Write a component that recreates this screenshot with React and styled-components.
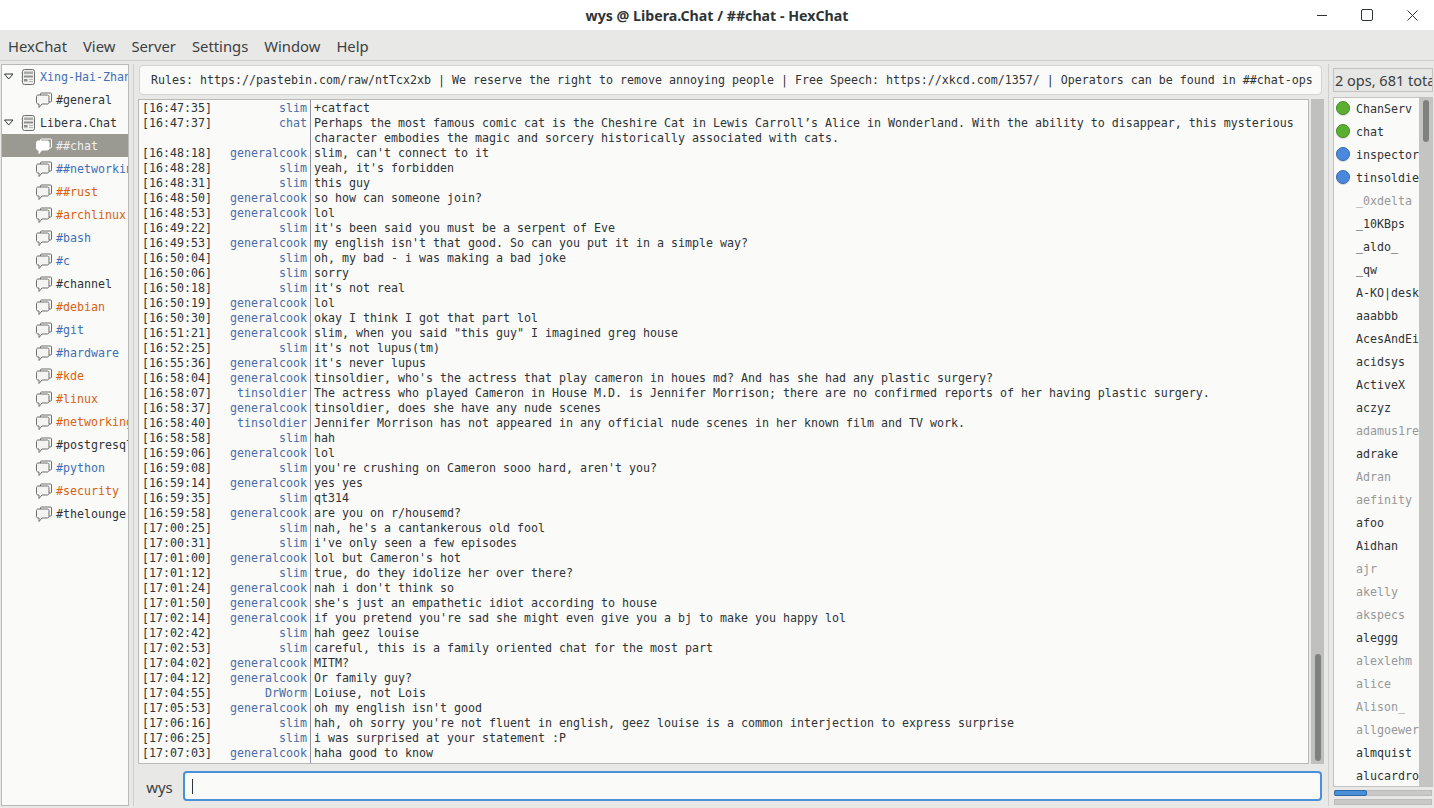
import React from "react";
import styled, { createGlobalStyle } from "styled-components";

const mono = `"DejaVu Sans Mono", monospace`;
const sans = `"Noto Sans", "Open Sans", sans-serif`;

const Global = createGlobalStyle`
  html, body { margin: 0; padding: 0; background: #e8e8e7; }
  * { box-sizing: border-box; }
`;

const Win = styled.div`
  width: 1434px; height: 808px; display: flex; flex-direction: column; overflow: hidden;
  background: #e8e8e7; color: #2e3436; font-family: ${sans};
`;
const TitleBar = styled.div`
  height: 30px; flex: none; background: #fff; display: flex; align-items: center; justify-content: center; position: relative;
  font-size: 14.2px; font-weight: 700; color: #2e3436;
`;
const WinButtons = styled.div`
  position: absolute; right: -1px; top: 0; height: 30px; display: flex;
`;
const WinButton = styled.div`
  width: 45px; height: 30px; display: flex; align-items: center; justify-content: center; color: #2e3436;
`;
const MenuBar = styled.div`
  height: 31px; flex: none; display: flex; align-items: center; padding: 2px 0 0 8px; gap: 16px;
  font-size: 14.8px; color: #3b4042; border-bottom: 1px solid #cfcfcd;
`;
const Body = styled.div`
  flex: 1; min-height: 0; display: flex; padding: 3px 1px 2px 1px;
`;
const TreePane = styled.div`
  width: 128px; flex: none; background: #fafaf9; border: 1px solid #b9b9b7; overflow: hidden;
`;
const TreeRow = styled.div`
  height: 23px; display: flex; align-items: center; white-space: nowrap; overflow: hidden;
  font: 11.63px ${mono};
  padding-left: ${p => (p.$server ? 2 : 34)}px;
  color: ${p => p.$selected ? "#efefef" : p.$color || "#2e3436"};
  background: ${p => p.$selected ? "#9a9992" : "transparent"};
`;
const Arrow = styled.svg`
  width: 12px; height: 8px; flex: none; margin-right: 4px;
`;
const RowIcon = styled.svg`
  width: 16px; height: 16px; flex: none; margin-right: 4px;
`;
const Divider = styled.div`
  width: 9px; flex: none; position: relative;
  &::after { content: ""; position: absolute; left: 4px; top: 0; bottom: 0; width: 1px; background: #cfcfcd; }
`;
const Center = styled.div`
  flex: 1; min-width: 0; display: flex; flex-direction: column;
`;
const Topic = styled.div`
  height: 30px; flex: none; margin: 1px 2px 0 1px; background: #fafaf9; border: 1px solid #d3d3d1; border-radius: 4px;
  font: 11.63px ${mono}; color: #2e3436; display: flex; align-items: center; padding-left: 11px; white-space: pre; overflow: hidden;
`;
const ChatRow = styled.div`
  flex: 1; min-height: 0; display: flex; margin-top: 4px;
`;
const ChatBox = styled.div`
  flex: 1; min-width: 0; background: #fafaf9; border: 1px solid #b9b9b7; position: relative; overflow: hidden; padding-top: 1px;
`;
const SepLine = styled.div`
  position: absolute; top: 0; bottom: 0; left: 171px; width: 1px; background: #8f8fa0;
`;
const Line = styled.div`
  display: grid; grid-template-columns: 72px 93px 1fr; font: 11.63px/15px ${mono}; color: #2e3436; padding-left: 3px;
`;
const Time = styled.span`
  white-space: pre;
`;
const Nick = styled.span`
  color: #4a6da7; text-align: right; white-space: pre; grid-column: 2;
`;
const Msg = styled.span`
  white-space: pre; padding-left: 7px; grid-column: 3;
`;
const VScroll = styled.div`
  width: 13px; flex: none; background: #c0c0be; position: relative; margin-left: 2px;
`;
const VThumb = styled.div`
  position: absolute; left: 4px; width: 6px; border-radius: 3px; background: #7f8180; top: ${p => p.$top}px; height: ${p => p.$h}px;
`;
const InputRow = styled.div`
  height: 42px; flex: none; display: flex; align-items: flex-start; padding: 7px 2px 0 0;
`;
const NickLabel = styled.div`
  width: 45px; height: 30px; flex: none; text-align: center; font-size: 15px; line-height: 32px; color: #3b4042; padding-right: 2px;
`;
const InputBox = styled.div`
  flex: 1; height: 30px; background: #fafaf9; border: 2px solid #4a90d9; border-radius: 4px; display: flex; align-items: center; padding-left: 7px;
`;
const Caret = styled.div`
  width: 1px; height: 15px; background: #2e3436;
`;
const RightPane = styled.div`
  width: 100px; flex: none; display: flex; flex-direction: column;
`;
const Count = styled.div`
  height: 24px; flex: none; margin-top: 4px; background: #e6e6e4; border: 1px solid #c2c2c0; font-size: 14.5px; color: #3b4042;
  white-space: nowrap; overflow: hidden; padding-left: 1px; line-height: 23px;
`;
const UserBox = styled.div`
  flex: 1; min-height: 0; margin-top: 5px; display: flex; border: 1px solid #c2c2c0; background: #fafaf9; overflow: hidden; position: relative;
`;
const UserList = styled.div`
  width: 85px; flex: none; overflow: hidden; margin-top: -1px;
`;
const UserRow = styled.div`
  height: 23px; display: flex; align-items: center; white-space: pre; font: 11.63px ${mono}; color: ${p => (p.$away ? "#96989a" : "#2e3436")};
  padding-left: 22px; position: relative; overflow: hidden;
`;
const Dot = styled.span`
  position: absolute; left: 2px; top: 4px; width: 14px; height: 14px; border-radius: 50%;
  background: ${p => p.$c}; border: 1px solid ${p => p.$b}; box-shadow: 0 1px 1px rgba(0,0,0,.15);
`;
const UserScroll = styled(VScroll)`
  width: 13px; margin-left: 0; background: #c4c4c2;
`;
const Bars = styled.div`
  flex: none; height: 19px; padding: 3px 1px 1px 1px; display: flex; flex-direction: column; gap: 3px;
`;
const Bar = styled.div`
  height: 6px; background: #c9c9c7; border: 1px solid #bcbcba; position: relative;
`;
const Fill = styled.div`
  position: absolute; left: -1px; top: -1px; bottom: -1px; border-radius: 2px; background: #4a90d9; border: 1px solid #2f68a8;
`;

const ServerGlyph = () => (
  <RowIcon viewBox="0 0 16 16" fill="none">
    <rect x="2.5" y="0.5" width="12" height="15" rx="2" fill="#f0f0ee" stroke="#6d6f6d" />
    <rect x="4" y="2.5" width="9" height="2.5" fill="#a9aba9" />
    <rect x="4" y="6.5" width="9" height="2" fill="#8f9190" />
    <rect x="4" y="10" width="3.5" height="2.5" fill="#8f9190" />
    <rect x="9" y="10" width="4" height="1" fill="#b5b7b5" />
    <rect x="9" y="12" width="4" height="1" fill="#b5b7b5" />
    <path d="M1.5 4h1M1.5 8h1M1.5 12h1" stroke="#8f9190" />
  </RowIcon>
);
const ChanGlyph = ({ sel }) => (
  <RowIcon viewBox="0 0 16 16" fill="none">
    <path d="M4.5 3V2a1 1 0 0 1 1-1h9a1 1 0 0 1 1 1v7a1 1 0 0 1-1 1H13" stroke={sel ? "#fff" : "#6d6f6d"} fill="none" />
    <path d="M.5 4.5c0-.8.7-1.5 1.5-1.5h9.5c.8 0 1.5.7 1.5 1.5v6c0 .8-.7 1.5-1.5 1.5H6l-3 3.5V12H2c-.8 0-1.5-.7-1.5-1.5z" fill={sel ? "#fff" : "#f4f4f2"} stroke={sel ? "#fff" : "#6d6f6d"} />
  </RowIcon>
);

const blue = "#3f6fb4", orange = "#d8620f", dark = "#2e3436";
const channels = [
  ["##networking", blue], ["##rust", orange], ["#archlinux", orange], ["#bash", blue], ["#c", blue],
  ["#channel", dark], ["#debian", orange], ["#git", blue], ["#hardware", blue], ["#kde", orange],
  ["#linux", orange], ["#networking", orange], ["#postgresql", dark], ["#python", blue], ["#security", orange], ["#thelounge", dark],
];

const L = [
  ["16:47:35","slim","+catfact"],
  ["16:47:37","chat","Perhaps the most famous comic cat is the Cheshire Cat in Lewis Carroll’s Alice in Wonderland. With the ability to disappear, this mysterious"],
  ["","","character embodies the magic and sorcery historically associated with cats."],
  ["16:48:18","generalcook","slim, can't connect to it"],
  ["16:48:28","slim","yeah, it's forbidden"],
  ["16:48:31","slim","this guy"],
  ["16:48:50","generalcook","so how can someone join?"],
  ["16:48:53","generalcook","lol"],
  ["16:49:22","slim","it's been said you must be a serpent of Eve"],
  ["16:49:53","generalcook","my english isn't that good. So can you put it in a simple way?"],
  ["16:50:04","slim","oh, my bad - i was making a bad joke"],
  ["16:50:06","slim","sorry"],
  ["16:50:18","slim","it's not real"],
  ["16:50:19","generalcook","lol"],
  ["16:50:30","generalcook","okay I think I got that part lol"],
  ["16:51:21","generalcook","slim, when you said \"this guy\" I imagined greg house"],
  ["16:52:25","slim","it's not lupus(tm)"],
  ["16:55:36","generalcook","it's never lupus"],
  ["16:58:04","generalcook","tinsoldier, who's the actress that play cameron in houes md? And has she had any plastic surgery?"],
  ["16:58:07","tinsoldier","The actress who played Cameron in House M.D. is Jennifer Morrison; there are no confirmed reports of her having plastic surgery."],
  ["16:58:37","generalcook","tinsoldier, does she have any nude scenes"],
  ["16:58:40","tinsoldier","Jennifer Morrison has not appeared in any official nude scenes in her known film and TV work."],
  ["16:58:58","slim","hah"],
  ["16:59:06","generalcook","lol"],
  ["16:59:08","slim","you're crushing on Cameron sooo hard, aren't you?"],
  ["16:59:14","generalcook","yes yes"],
  ["16:59:35","slim","qt314"],
  ["16:59:58","generalcook","are you on r/housemd?"],
  ["17:00:25","slim","nah, he's a cantankerous old fool"],
  ["17:00:31","slim","i've only seen a few episodes"],
  ["17:01:00","generalcook","lol but Cameron's hot"],
  ["17:01:12","slim","true, do they idolize her over there?"],
  ["17:01:24","generalcook","nah i don't think so"],
  ["17:01:50","generalcook","she's just an empathetic idiot according to house"],
  ["17:02:14","generalcook","if you pretend you're sad she might even give you a bj to make you happy lol"],
  ["17:02:42","slim","hah geez louise"],
  ["17:02:53","slim","careful, this is a family oriented chat for the most part"],
  ["17:04:02","generalcook","MITM?"],
  ["17:04:12","generalcook","Or family guy?"],
  ["17:04:55","DrWorm","Loiuse, not Lois"],
  ["17:05:53","generalcook","oh my english isn't good"],
  ["17:06:16","slim","hah, oh sorry you're not fluent in english, geez louise is a common interjection to express surprise"],
  ["17:06:25","slim","i was surprised at your statement :P"],
  ["17:07:03","generalcook","haha good to know"],
];

const users = [
  ["ChanServ","g"],["chat","g"],["inspector","b"],["tinsoldier","b"],["_0xdelta","a"],["_10KBps",""],["_aldo_",""],["_qw",""],
  ["A-KO|desktop",""],["aaabbb",""],["AcesAndEights",""],["acidsys",""],["ActiveX",""],["aczyz",""],["adamus1red","a"],["adrake",""],
  ["Adran","a"],["aefinity","a"],["afoo",""],["Aidhan",""],["ajr","a"],["akelly","a"],["akspecs","a"],["aleggg",""],
  ["alexlehm","a"],["alice","a"],["Alison_","a"],["allgoewer","a"],["almquist",""],["alucardrocks",""],
];

const Menu = ["HexChat","View","Server","Settings","Window","Help"];

const TreeArrow = () => (
  <Arrow viewBox="0 0 12 8"><path d="M.5 1h8.5L4.7 6z" fill="#fff" stroke="#2e3436" /></Arrow>
);

export default function App() {
  return (
    <Win>
      <Global />
      <TitleBar>
        wys @ Libera.Chat / ##chat - HexChat
        <WinButtons>
          <WinButton>
            <svg width="11" height="12" viewBox="0 0 11 12"><path d="M0 6.5h10" stroke="#2e3436" /></svg>
          </WinButton>
          <WinButton>
            <svg width="13" height="12" viewBox="0 0 13 12"><rect x=".5" y=".5" width="11" height="11" rx="1.5" fill="none" stroke="#2e3436" /></svg>
          </WinButton>
          <WinButton>
            <svg width="11" height="11" viewBox="0 0 11 11"><path d="M.5.5l10 10M10.5.5l-10 10" stroke="#2e3436" /></svg>
          </WinButton>
        </WinButtons>
      </TitleBar>
      <MenuBar>{Menu.map(m => <span key={m}>{m}</span>)}</MenuBar>
      <Body>
        <TreePane>
          <TreeRow $server $color={blue}><TreeArrow /><ServerGlyph />Xing-Hai-Zhang</TreeRow>
          <TreeRow><ChanGlyph />#general</TreeRow>
          <TreeRow $server><TreeArrow /><ServerGlyph />Libera.Chat</TreeRow>
          <TreeRow $selected><ChanGlyph sel />##chat</TreeRow>
          {channels.map(([n, c]) => <TreeRow key={n} $color={c}><ChanGlyph />{n}</TreeRow>)}
        </TreePane>
        <Divider />
        <Center>
          <Topic>Rules: https://pastebin.com/raw/ntTcx2xb | We reserve the right to remove annoying people | Free Speech: https://xkcd.com/1357/ | Operators can be found in ##chat-ops</Topic>
          <ChatRow>
            <ChatBox>
              <SepLine />
              {L.map((l, i) => (
                <Line key={i}>
                  <Time>{l[0] ? `[${l[0]}]` : ""}</Time>
                  <Nick>{l[1]}</Nick>
                  <Msg>{l[2]}</Msg>
                </Line>
              ))}
            </ChatBox>
            <VScroll><VThumb $top={555} $h={107} /></VScroll>
          </ChatRow>
          <InputRow>
            <NickLabel>wys</NickLabel>
            <InputBox><Caret /></InputBox>
          </InputRow>
        </Center>
        <Divider />
        <RightPane>
          <Count>2 ops, 681 total</Count>
          <UserBox>
            <UserList>
              {users.map(([n, k]) => (
                <UserRow key={n} $away={k === "a"}>
                  {k === "g" && <Dot $c="#5ab02e" $b="#4b8a2a" />}
                  {k === "b" && <Dot $c="#4a88de" $b="#3a6cb0" />}
                  {n}
                </UserRow>
              ))}
            </UserList>
            <UserScroll><VThumb $top={2} $h={42} /></UserScroll>
          </UserBox>
          <Bars>
            <Bar><Fill style={{ width: "34%" }} /></Bar>
            <Bar />
          </Bars>
        </RightPane>
      </Body>
    </Win>
  );
}
